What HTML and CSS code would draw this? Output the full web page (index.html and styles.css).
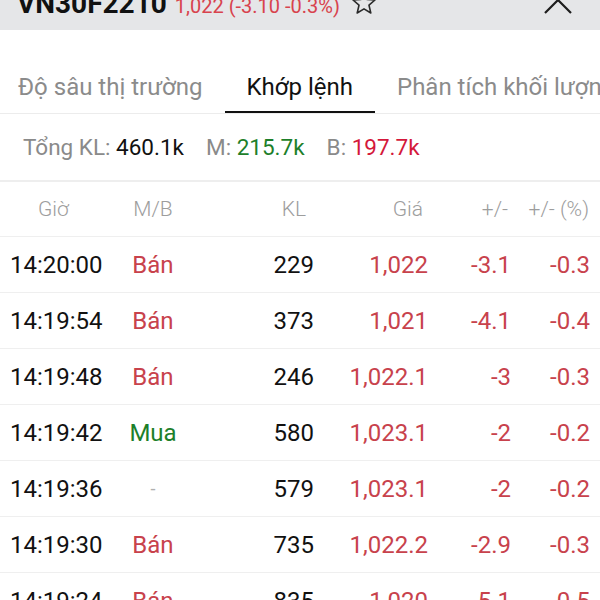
FILE: index.html
```html
<!DOCTYPE html>
<html lang="vi">

<head>
    <meta charset="UTF-8" />
    <meta name="viewport" content="width=device-width, initial-scale=1.0" />
    <title>VN30F2210 - Khớp lệnh</title>
    <link rel="stylesheet" href="styles.css">
</head>

<body>
    <header class="topbar">
        <div class="symbol">
            <span class="code">VN30F2210</span>
            <span class="quote">1,022 (-3.10 -0.3%)</span>
            <svg class="star" viewBox="0 0 26 26" width="26" height="26">
                <path d="M13 2 L16.1 9.4 L24 10 L18 15.2 L19.8 23 L13 18.9 L6.2 23 L8 15.2 L2 10 L9.9 9.4 Z"
                    fill="none" stroke="#2b2b2b" stroke-width="1.6" stroke-linejoin="round" />
            </svg>
        </div>
        <svg class="close" viewBox="0 0 30 30" width="30" height="30">
            <path d="M2 2 L28 28 M28 2 L2 28" stroke="#1e1e1e" stroke-width="2.2" fill="none" />
        </svg>
    </header>

    <nav class="tabs">
        <a class="tab">Độ sâu thị trường</a>
        <a class="tab active">Khớp lệnh</a>
        <a class="tab">Phân tích khối lượng</a>
    </nav>

    <div class="summary">
        <span><span class="label">Tổng KL:</span> 460.1k</span>
        <span><span class="label">M:</span> <span class="up">215.7k</span></span>
        <span><span class="label">B:</span> <span class="down">197.7k</span></span>
    </div>

    <div class="trades">
        <div class="row head">
            <div class="c-time">Giờ</div>
            <div class="c-side">M/B</div>
            <div class="c-vol">KL</div>
            <div class="c-price">Giá</div>
            <div class="c-chg">+/-</div>
            <div class="c-pct">+/- (%)</div>
        </div>

        <div class="row">
            <div class="c-time">14:20:00</div>
            <div class="c-side sell">Bán</div>
            <div class="c-vol">229</div>
            <div class="c-price">1,022</div>
            <div class="c-chg">-3.1</div>
            <div class="c-pct">-0.3</div>
        </div>
        <div class="row">
            <div class="c-time">14:19:54</div>
            <div class="c-side sell">Bán</div>
            <div class="c-vol">373</div>
            <div class="c-price">1,021</div>
            <div class="c-chg">-4.1</div>
            <div class="c-pct">-0.4</div>
        </div>
        <div class="row">
            <div class="c-time">14:19:48</div>
            <div class="c-side sell">Bán</div>
            <div class="c-vol">246</div>
            <div class="c-price">1,022.1</div>
            <div class="c-chg">-3</div>
            <div class="c-pct">-0.3</div>
        </div>
        <div class="row">
            <div class="c-time">14:19:42</div>
            <div class="c-side buy">Mua</div>
            <div class="c-vol">580</div>
            <div class="c-price">1,023.1</div>
            <div class="c-chg">-2</div>
            <div class="c-pct">-0.2</div>
        </div>
        <div class="row">
            <div class="c-time">14:19:36</div>
            <div class="c-side none">-</div>
            <div class="c-vol">579</div>
            <div class="c-price">1,023.1</div>
            <div class="c-chg">-2</div>
            <div class="c-pct">-0.2</div>
        </div>
        <div class="row">
            <div class="c-time">14:19:30</div>
            <div class="c-side sell">Bán</div>
            <div class="c-vol">735</div>
            <div class="c-price">1,022.2</div>
            <div class="c-chg">-2.9</div>
            <div class="c-pct">-0.3</div>
        </div>
        <div class="row">
            <div class="c-time">14:19:24</div>
            <div class="c-side sell">Bán</div>
            <div class="c-vol">835</div>
            <div class="c-price">1,020</div>
            <div class="c-chg">-5.1</div>
            <div class="c-pct">-0.5</div>
        </div>
    </div>

</body>

</html>
```

FILE: styles.css
```css
html,
body {
    overflow: hidden;
}

body {
    font-family: Roboto, "Noto Sans", sans-serif;
    background: #fff;
    color: #111;
    margin: 0;
}

.topbar {
    display: flex;
    justify-content: space-between;
    height: 30px;
    overflow: hidden;
    background: #e5e6e8;
    padding: 0 27px 0 17px;
}

.symbol {
    display: flex;
    align-items: baseline;
    margin-top: -9px;
    line-height: 26px;
}

.code {
    font-size: 28px;
    font-weight: bold;
    color: #111;
}

.quote {
    font-size: 20px;
    color: #d8434d;
    margin-left: 8px;
}

.star {
    align-self: flex-start;
    margin: -1px 0 0 11px;
}

.close {
    margin-top: -15px;
}

/* tabs */
.tabs {
    display: flex;
    margin-left: -4px;
    padding-top: 43px;
    border-bottom: 1px solid #ececec;
    white-space: nowrap;
}

.tab {
    flex-shrink: 0;
    padding: 0 22px 10px;
    font-size: 24px;
    line-height: 28px;
    color: #8b8b8b;
    border-bottom: 2px solid transparent;
}

.tab.active {
    color: #111;
    border-bottom-color: #111;
}

/* totals */
.summary {
    display: flex;
    align-items: center;
    gap: 22px;
    height: 66px;
    padding-left: 23px;
    font-size: 22.5px;
    color: #111;
    border-bottom: 2px solid #eeeeee;
}

.label {
    color: #8a8a8a;
}

.up {
    color: #1d7f2a;
}

.down {
    color: #d4183b;
}

/* trade list */
.row {
    display: grid;
    grid-template-columns: 103px 80px 121px 114px 83px 1fr;
    align-items: center;
    height: 55px;
    padding: 0 10px;
    border-bottom: 1px solid #efefef;
    font-size: 24px;
    color: #c8424c;
}

.row.head {
    height: 54px;
    font-size: 21px;
    font-weight: 300;
    color: #9d9d9d;
}

.c-time {
    color: #111;
}

.c-side {
    text-align: center;
}

.c-vol {
    text-align: right;
    color: #111;
}

.c-price,
.c-chg,
.c-pct {
    text-align: right;
}

.head .c-time {
    padding-left: 28px;
    color: #9d9d9d;
}

.head .c-vol {
    padding-right: 8px;
    color: #9d9d9d;
}

.head .c-price {
    padding-right: 5px;
}

.head .c-chg {
    padding-right: 3px;
}

.head .c-pct {
    padding-right: 1px;
}

.sell {
    color: #c8424c;
}

.buy {
    color: #1d7f2a;
}

.none {
    color: #b0b0b0;
    font-size: 18px;
}
```
